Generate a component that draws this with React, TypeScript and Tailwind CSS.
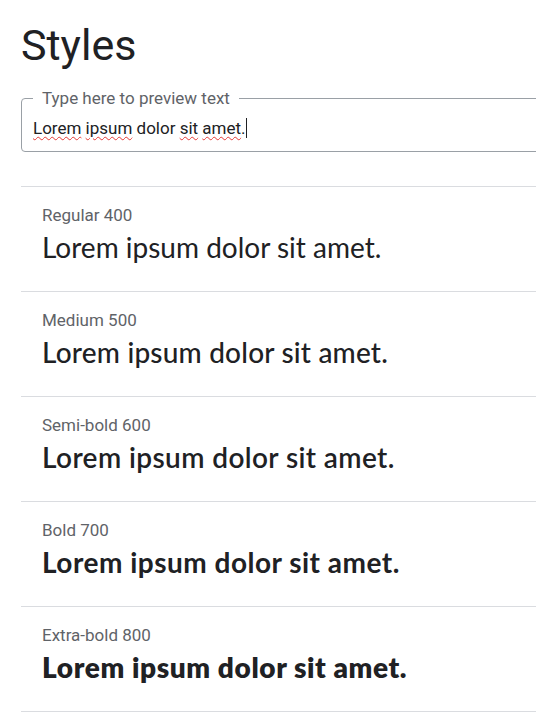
import React from "react";

const rows = [
  { label: "Regular 400", cls: "font-normal tracking-[0px]" },
  { label: "Medium 500", cls: "font-medium tracking-[0.2px]" },
  { label: "Semi-bold 600", cls: "font-semibold tracking-[0.4px]" },
  { label: "Bold 700", cls: "font-bold tracking-[0.5px]" },
  { label: "Extra-bold 800", cls: "font-extrabold tracking-[0.6px]" },
];

const wavy = "underline decoration-wavy decoration-[#e53935] decoration-1 underline-offset-[2px]";

export default function App() {
  return (
    <div className="w-[536px] h-[712px] overflow-hidden bg-white font-['Roboto',sans-serif] text-[#202124]">
      <div className="ml-[21px] w-[640px]">
        <h2 className="pt-[17px] text-[43px] leading-[56px] font-normal text-[#202124]">Styles</h2>
        <fieldset className="mt-[15px] border border-[#9aa0a6] rounded-[4px] px-[11px] pb-[11px] pt-0">
          <legend className="px-[9px] text-[17px] leading-[20px] text-[#5f6368]">Type here to preview text</legend>
          <div className="mt-[8px] text-[17px] leading-[24px] text-[#202124] flex items-center">
            <span className={wavy}>Lorem</span>
            <span>&nbsp;</span>
            <span className={wavy}>ipsum</span>
            <span>&nbsp;dolor&nbsp;</span>
            <span className={wavy}>sit</span>
            <span>&nbsp;</span>
            <span className={wavy}>amet</span>
            <span>.</span>
            <span className="inline-block w-px h-[20px] bg-[#202124]" />
          </div>
        </fieldset>
        <div className="mt-[34px] border-b border-[#dadce0]">
          {rows.map((r) => (
            <div key={r.label} className="border-t border-[#dadce0] h-[105px] pl-[21px] pt-[18px]">
              <div className="text-[17px] leading-[20px] text-[#5f6368]">{r.label}</div>
              <div className={`mt-[5px] text-[28px] leading-[34px] text-[#202124] font-['Lato',sans-serif] ${r.cls}`}>
                Lorem ipsum dolor sit amet.
              </div>
            </div>
          ))}
        </div>
      </div>
    </div>
  );
}
